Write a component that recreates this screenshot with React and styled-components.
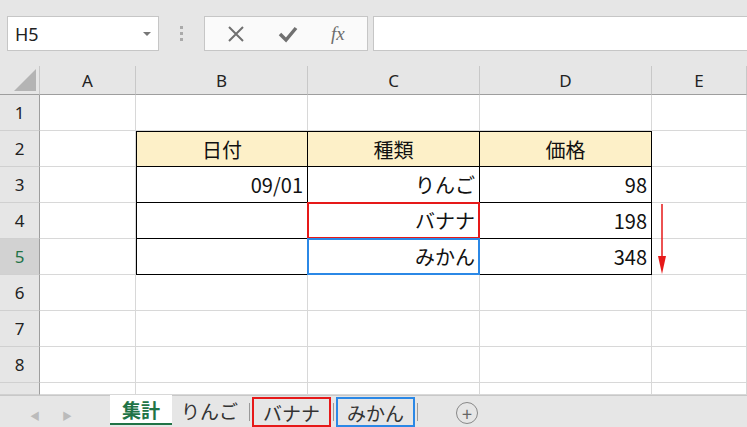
import React from "react";
import styled, { createGlobalStyle, css } from "styled-components";

const G = createGlobalStyle`
  body{margin:0;background:#f7f7f7;font-family:"Noto Sans CJK JP","Noto Sans",sans-serif;overflow:hidden;}
`;
const Wrap = styled.div`width:747px;height:427px;display:flex;flex-direction:column;background:#f7f7f7;position:relative;`;
const Bar = styled.div`height:66px;background:#e6e6e6;display:flex;align-items:flex-start;padding:16px 0 0 7px;box-sizing:border-box;gap:0;`;
const NameBox = styled.div`width:152px;height:35px;box-sizing:border-box;border:1px solid #c6c6c6;background:#fff;display:flex;align-items:center;justify-content:space-between;padding:0 7px;font-family:"Noto Sans",sans-serif;font-size:18px;color:#222;`;
const Caret = styled.span`width:0;height:0;border-left:4px solid transparent;border-right:4px solid transparent;border-top:4px solid #777;`;
const Dots = styled.div`width:45px;display:flex;flex-direction:column;align-items:center;gap:3px;padding-top:10px;span{width:3px;height:3px;background:#aaa;}`;
const Fx = styled.div`width:164px;height:35px;box-sizing:border-box;border:1px solid #c6c6c6;background:#fafafa;display:flex;align-items:center;justify-content:space-around;padding:0 6px;color:#6d6d6d;`;
const Formula = styled.div`flex:1;height:35px;margin-left:5px;box-sizing:border-box;border:1px solid #c6c6c6;border-right:none;background:#fff;`;
const Grid = styled.div`display:grid;grid-template-columns:40px 96px 172px 172px 172px 95px;grid-template-rows:29px repeat(8,36px) 12px;`;
const Cell = styled.div`
  box-sizing:border-box;border-right:1px solid #d8d8d8;border-bottom:1px solid #d8d8d8;background:#fff;
  font-size:20px;color:#111;display:flex;align-items:center;justify-content:${p=>p.$c?"center":"flex-end"};padding:0 4px;
  ${p=>p.$hdr&&css`background:#fdf0c8;`}
  position:relative;
`;
const Hd = styled.div`box-sizing:border-box;background:#e6e6e6;border-right:1px solid #c8c8c8;border-bottom:1px solid #9e9e9e;display:flex;align-items:center;justify-content:center;font-family:"Noto Sans",sans-serif;font-size:17px;color:#222;overflow:hidden;
  ${p=>p.$sel&&css`background:#d2d2d2;color:#217346;border-right:2px solid #217346;`}`;
const RowH = styled(Hd)`border-bottom:1px solid #d0d0d0;border-right:1px solid #9e9e9e;`;
const Corner = styled(Hd)`justify-content:flex-end;align-items:flex-end;padding:0 3px 3px 0;`;
const Box = styled.div`position:absolute;inset:-1px;border:2px solid ${p=>p.$col};pointer-events:none;`;
const Tabs = styled.div`flex:1;background:#e6e6e6;border-top:1px solid #c8c8c8;display:flex;align-items:flex-start;font-size:19px;`;
const Tab = styled.div`height:28px;box-sizing:border-box;display:flex;align-items:center;padding:0 9px;color:#333;
  ${p=>p.$act&&css`background:#fff;color:#217346;font-weight:bold;border-bottom:2px solid #217346;margin-top:-1px;height:30px;padding:0 12px;`}
  ${p=>p.$box&&css`border:2px solid ${p.$box};margin-top:1px;height:30px;`}`;
const Sep = styled.div`width:1px;height:18px;background:#999;margin:7px 2px 0;`;
const Arrows = styled.div`width:110px;display:flex;gap:22px;padding:12px 0 0 30px;box-sizing:border-box;color:#bbb;font-size:10px;`;
const Plus = styled.div`margin:6px 0 0 36px;width:20px;height:20px;border:1.5px solid #888;border-radius:50%;display:flex;align-items:center;justify-content:center;color:#666;font-size:18px;line-height:1;`;
const ArrowSvg = styled.svg`position:absolute;left:656px;top:204px;`;

const cols=["A","B","C","D","E"];
const data={2:["","日付","種類","価格",""],3:["","09/01","りんご","98",""],4:["","","バナナ","198",""],5:["","","みかん","348",""]};

export default function App(){
  const rows=[];
  for(let r=1;r<=9;r++){
    rows.push(<RowH key={"h"+r} $sel={r===5}>{r<9?r:""}</RowH>);
    for(let c=0;c<5;c++){
      const v=data[r]?.[c]||"";
      const inT=r>=2&&r<=5&&c>=1&&c<=3;
      const st=inT?{borderRight:"1px solid #000",borderBottom:"1px solid #000",...(c===1?{borderLeft:"1px solid #000"}:{}),...(r===2?{borderTop:"1px solid #000"}:{})}:undefined;
      rows.push(<Cell key={r+"-"+c} $c={r===2} $hdr={r===2&&inT} style={st}>{v}
        {r===4&&c===2&&<Box $col="#e61919"/>}{r===5&&c===2&&<Box $col="#2b88e6"/>}</Cell>);
    }
  }
  return <Wrap><G/>
    <Bar>
      <NameBox>H5<Caret/></NameBox>
      <Dots><span/><span/><span/></Dots>
      <Fx>
        <svg width="18" height="18" viewBox="0 0 18 18"><path d="M2 2L16 16M16 2L2 16" stroke="#707070" strokeWidth="2"/></svg>
        <svg width="20" height="18" viewBox="0 0 20 18"><path d="M2 9L8 15L18 3" stroke="#707070" strokeWidth="3.5" fill="none"/></svg>
        <span style={{fontFamily:"'Liberation Serif',serif",fontStyle:"italic",fontSize:19}}>fx</span>
      </Fx>
      <Formula/>
    </Bar>
    <Grid>
      <Corner><svg width="22" height="22"><path d="M22 0L22 22L0 22Z" fill="#b4b4b4"/></svg></Corner>
      {cols.map(c=><Hd key={c}>{c}</Hd>)}
      {rows}
    </Grid>
    <ArrowSvg width="12" height="72" viewBox="0 0 12 72"><path d="M6 0V60" stroke="#e61919" strokeWidth="1.5"/><path d="M2 52L6 70L10 52Z" fill="#e61919"/></ArrowSvg>
    <Tabs>
      <Arrows><span>◀</span><span>▶</span></Arrows>
      <Tab $act>集計</Tab>
      <Tab>りんご</Tab>
      <Sep/>
      <Tab $box="#e61919">バナナ</Tab>
      <Sep/>
      <Tab $box="#2b88e6">みかん</Tab>
      <Sep/>
      <Plus>+</Plus>
    </Tabs>
  </Wrap>;
}
